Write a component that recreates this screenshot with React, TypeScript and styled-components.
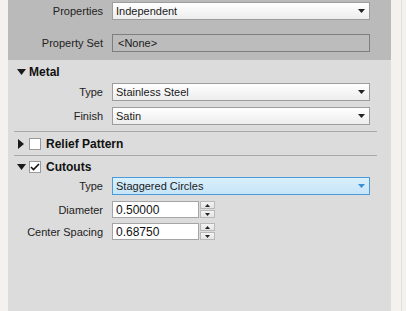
import React from "react";
import styled, { createGlobalStyle } from "styled-components";

const GlobalStyle = createGlobalStyle`
  html, body {
    margin: 0;
    padding: 0;
    background: #f3f2ee;
    font-family: "Liberation Sans", Arial, sans-serif;
    font-size: 11px;
    color: #1e1e1e;
  }
  #root {
    min-height: 100vh;
  }
`;

const Page = styled.div`
  display: flex;
  height: 311px;
  overflow: hidden;
`;

const Panel = styled.div`
  margin-left: 8px;
  width: 383px;
  background: #dcdcdc;
  display: flex;
  flex-direction: column;
`;

const RightGutter = styled.div`
  width: 10px;
  border-right: 1px solid #e3e2dd;
`;

const TopBand = styled.div`
  background: #bababa;
  height: 60px;
  padding-top: 2px;
  box-sizing: border-box;
  display: flex;
  flex-direction: column;
  gap: 14px;
`;

const Body = styled.div`
  display: flex;
  flex-direction: column;
`;

const Row = styled.div<{ $top?: number }>`
  display: grid;
  grid-template-columns: 95px 258px;
  column-gap: 9px;
  align-items: center;
  margin-top: ${(p) => p.$top ?? 0}px;
`;

const Label = styled.div`
  text-align: right;
  color: #222;
  white-space: nowrap;
`;

const Select = styled.div<{ $active?: boolean }>`
  height: 18px;
  box-sizing: border-box;
  border: 1px solid ${(p) => (p.$active ? "#4b9bd9" : "#9d9d9d")};
  background: ${(p) =>
    p.$active
      ? "linear-gradient(#d9effb, #c6e5f8)"
      : "linear-gradient(#ffffff, #ededed)"};
  display: flex;
  align-items: center;
  justify-content: space-between;
  padding: 0 4px 0 3px;
  color: #1a1a1a;
`;

const Field = styled.div`
  height: 18px;
  box-sizing: border-box;
  border: 1px solid #7e7e7e;
  background: #bcbcbc;
  display: flex;
  align-items: center;
  padding-left: 5px;
  color: #1a1a1a;
`;

const Spin = styled.div`
  display: flex;
  align-items: stretch;
  gap: 1px;
  width: 103px;
  height: 17px;
`;

const SpinInput = styled.div`
  width: 87px;
  box-sizing: border-box;
  border: 1px solid #a5a5a5;
  background: #ffffff;
  display: flex;
  align-items: center;
  padding: 1px 0 0 3px;
  color: #111;
  font-size: 12px;
`;

const SpinButtons = styled.div`
  display: flex;
  flex-direction: column;
  width: 15px;
  gap: 1px;
`;

const SpinButton = styled.div`
  flex: 1;
  box-sizing: border-box;
  border: 1px solid #b8b8b8;
  background: linear-gradient(#f4f4f4, #e4e4e4);
  display: flex;
  align-items: center;
  justify-content: center;
`;

const Header = styled.div<{ $h: number }>`
  height: ${(p) => p.$h}px;
  display: flex;
  align-items: center;
  padding-left: 8px;
  font-size: 12px;
  font-weight: 700;
  color: #111;
`;

const Twisty = styled.span`
  display: flex;
  width: 10px;
  justify-content: center;
  margin-right: 3px;
`;

const Check = styled.span`
  width: 12px;
  height: 12px;
  box-sizing: border-box;
  border: 1px solid #9a9a9a;
  background: #fff;
  display: flex;
  align-items: center;
  justify-content: center;
  margin-right: 5px;
`;

const Separator = styled.div<{ $top?: number }>`
  height: 1px;
  background: #a9a9a9;
  margin: ${(p) => p.$top ?? 0}px 0 0 6px;
  width: 363px;
`;

const Arrow = ({ color = "#222" }: { color?: string }) => (
  <svg width="7" height="4" viewBox="0 0 7 4">
    <polygon points="0,0 7,0 3.5,4" fill={color} />
  </svg>
);

const Down = () => (
  <svg width="9" height="6" viewBox="0 0 9 6">
    <polygon points="0,0 9,0 4.5,6" fill="#1a1a1a" />
  </svg>
);

const RightTri = () => (
  <svg width="6" height="10" viewBox="0 0 6 10">
    <polygon points="0,0 6,5 0,10" fill="#1a1a1a" />
  </svg>
);

const Tick = () => (
  <svg width="10" height="8" viewBox="0 0 10 8">
    <path d="M1 4 L3.5 6.5 L9 1" stroke="#111" strokeWidth="1.6" fill="none" />
  </svg>
);

const SmallTri = ({ up }: { up?: boolean }) => (
  <svg width="5" height="3" viewBox="0 0 5 3">
    <polygon points={up ? "2.5,0 5,3 0,3" : "0,0 5,0 2.5,3"} fill="#222" />
  </svg>
);

const SelectBox = ({ value, active }: { value: string; active?: boolean }) => (
  <Select $active={active}>
    <span>{value}</span>
    <Arrow color={active ? "#3a8fd5" : "#222"} />
  </Select>
);

const SpinBox = ({ value }: { value: string }) => (
  <Spin>
    <SpinInput>{value}</SpinInput>
    <SpinButtons>
      <SpinButton><SmallTri up /></SpinButton>
      <SpinButton><SmallTri /></SpinButton>
    </SpinButtons>
  </Spin>
);

export default function App() {
  return (
    <>
      <GlobalStyle />
      <Page>
        <Panel>
          <TopBand>
            <Row>
              <Label>Properties</Label>
              <SelectBox value="Independent" />
            </Row>
            <Row>
              <Label>Property Set</Label>
              <Field>&lt;None&gt;</Field>
            </Row>
          </TopBand>
          <Body>
            <Header $h={23}>
              <Twisty><Down /></Twisty>
              Metal
            </Header>
            <Row>
              <Label>Type</Label>
              <SelectBox value="Stainless Steel" />
            </Row>
            <Row $top={6}>
              <Label>Finish</Label>
              <SelectBox value="Satin" />
            </Row>
            <Separator $top={6} />
            <Header $h={23}>
              <Twisty><RightTri /></Twisty>
              <Check />
              Relief Pattern
            </Header>
            <Separator />
            <Header $h={21}>
              <Twisty><Down /></Twisty>
              <Check><Tick /></Check>
              Cutouts
            </Header>
            <Row>
              <Label>Type</Label>
              <SelectBox value="Staggered Circles" active />
            </Row>
            <Row $top={6}>
              <Label>Diameter</Label>
              <SpinBox value="0.50000" />
            </Row>
            <Row $top={5}>
              <Label>Center Spacing</Label>
              <SpinBox value="0.68750" />
            </Row>
          </Body>
        </Panel>
        <RightGutter />
      </Page>
    </>
  );
}
